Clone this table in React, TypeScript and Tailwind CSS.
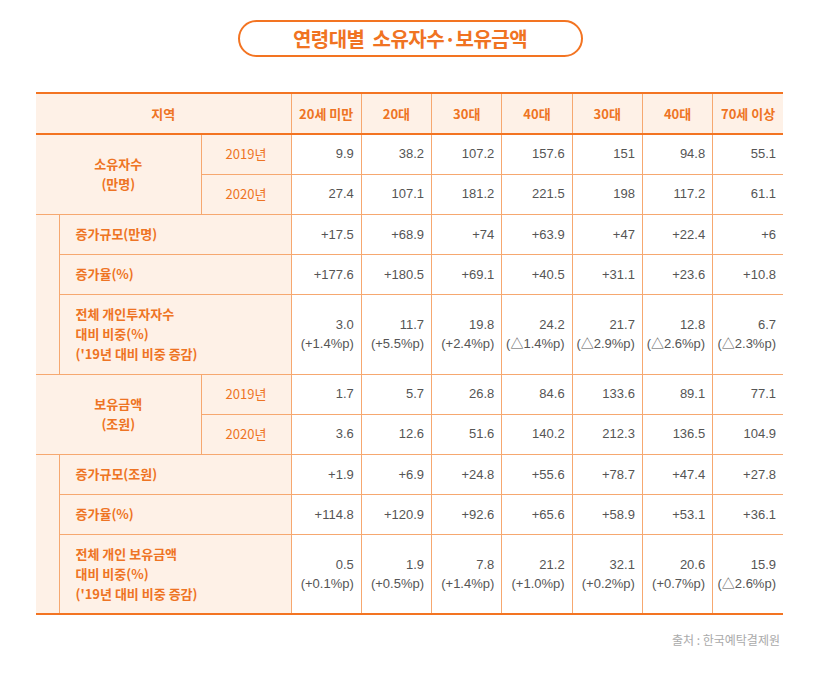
import React from "react"

const ages = ["20세 미만", "20대", "30대", "40대", "30대", "40대", "70세 이상"]

type Group = {
  title: string[]
  years: { label: string; values: string[] }[]
  subs: { label: string[]; values: string[][] }[]
}

const groups: Group[] = [
  {
    title: ["소유자수", "(만명)"],
    years: [
      { label: "2019년", values: ["9.9", "38.2", "107.2", "157.6", "151", "94.8", "55.1"] },
      { label: "2020년", values: ["27.4", "107.1", "181.2", "221.5", "198", "117.2", "61.1"] },
    ],
    subs: [
      { label: ["증가규모(만명)"], values: [["+17.5"], ["+68.9"], ["+74"], ["+63.9"], ["+47"], ["+22.4"], ["+6"]] },
      { label: ["증가율(%)"], values: [["+177.6"], ["+180.5"], ["+69.1"], ["+40.5"], ["+31.1"], ["+23.6"], ["+10.8"]] },
      {
        label: ["전체 개인투자자수", "대비 비중(%)", "('19년 대비 비중 증감)"],
        values: [
          ["3.0", "(+1.4%p)"],
          ["11.7", "(+5.5%p)"],
          ["19.8", "(+2.4%p)"],
          ["24.2", "(△1.4%p)"],
          ["21.7", "(△2.9%p)"],
          ["12.8", "(△2.6%p)"],
          ["6.7", "(△2.3%p)"],
        ],
      },
    ],
  },
  {
    title: ["보유금액", "(조원)"],
    years: [
      { label: "2019년", values: ["1.7", "5.7", "26.8", "84.6", "133.6", "89.1", "77.1"] },
      { label: "2020년", values: ["3.6", "12.6", "51.6", "140.2", "212.3", "136.5", "104.9"] },
    ],
    subs: [
      { label: ["증가규모(조원)"], values: [["+1.9"], ["+6.9"], ["+24.8"], ["+55.6"], ["+78.7"], ["+47.4"], ["+27.8"]] },
      { label: ["증가율(%)"], values: [["+114.8"], ["+120.9"], ["+92.6"], ["+65.6"], ["+58.9"], ["+53.1"], ["+36.1"]] },
      {
        label: ["전체 개인 보유금액", "대비 비중(%)", "('19년 대비 비중 증감)"],
        values: [
          ["0.5", "(+0.1%p)"],
          ["1.9", "(+0.5%p)"],
          ["7.8", "(+1.4%p)"],
          ["21.2", "(+1.0%p)"],
          ["32.1", "(+0.2%p)"],
          ["20.6", "(+0.7%p)"],
          ["15.9", "(△2.6%p)"],
        ],
      },
    ],
  },
]

// thin grid line + label cell styles
const line = "border-b border-r border-[#f6a870]"
const labelCell = `${line} bg-[#fef1e7] text-[#ee7424]`
const dataCell = `${line} bg-white text-right pr-[7px] text-[#555] last:border-r-0 font-[Liberation_Sans,Noto_Sans_CJK_KR,sans-serif]`

export default function App() {
  return (
    <div
      className="w-[820px] h-[689px] bg-white"
      style={{ fontFamily: "'Noto Sans CJK KR', 'Noto Sans', sans-serif" }}
    >
      <div className="flex justify-center pt-[20px]">
        <div className="w-[345px] h-[37px] rounded-full border-2 border-[#f37422] flex items-center justify-center">
          <span className="text-[20px] font-bold text-[#f07322] tracking-[-0.5px] [word-spacing:4px]">
            연령대별 소유자수·보유금액
          </span>
        </div>
      </div>

      <table className="mt-[35px] ml-[36px] w-[747px] table-fixed border-collapse text-[13px] leading-[18px]">
        <colgroup>
          <col className="w-[23px]" />
          <col className="w-[142px]" />
          <col className="w-[90px]" />
          {ages.map((_, i) => (
            <col key={i} />
          ))}
        </colgroup>
        <thead>
          <tr className="h-[41px]">
            <th
              colSpan={3}
              className="border-t-2 border-b-2 border-r border-t-[#f37422] border-b-[#f37422] border-r-[#f6a870] bg-[#fef1e7] text-[#ee7424] font-bold"
            >
              지역
            </th>
            {ages.map((a, i) => (
              <th
                key={i}
                className="border-t-2 border-b-2 border-r border-t-[#f37422] border-b-[#f37422] border-r-[#f6a870] last:border-r-0 bg-[#fef1e7] text-[#ee7424] font-bold"
              >
                {a}
              </th>
            ))}
          </tr>
        </thead>
        <tbody>
          {groups.map((g, gi) => (
            <React.Fragment key={gi}>
              {g.years.map((y, yi) => (
                <tr key={"y" + yi} className="h-[40px]">
                  {yi === 0 && (
                    <td rowSpan={2} colSpan={2} className={`${labelCell} text-center font-semibold leading-[20px]`}>
                      {g.title.map((t, ti) => (
                        <div key={ti}>{t}</div>
                      ))}
                    </td>
                  )}
                  <td className={`${labelCell} text-center`}>{y.label}</td>
                  {y.values.map((v, vi) => (
                    <td key={vi} className={dataCell}>
                      {v}
                    </td>
                  ))}
                </tr>
              ))}
              {g.subs.map((s, si) => {
                const last = gi === groups.length - 1 && si === g.subs.length - 1
                const bottom = last ? "border-b-2 border-b-[#f37422]" : ""
                return (
                  <tr key={"s" + si} className={s.label.length > 1 ? "h-[80px]" : "h-[40px]"}>
                    {si === 0 && (
                      <td rowSpan={3} className={`${labelCell} ${gi === groups.length - 1 ? "border-b-2 border-b-[#f37422]" : ""}`} />
                    )}
                    <td colSpan={2} className={`${labelCell} ${bottom} pl-4 text-left font-semibold leading-[20px]`}>
                      {s.label.map((t, ti) => (
                        <div key={ti}>{t}</div>
                      ))}
                    </td>
                    {s.values.map((v, vi) => (
                      <td key={vi} className={`${dataCell} ${bottom} leading-[19px]`}>
                        {v.map((t, ti) => (
                          <div key={ti}>{t}</div>
                        ))}
                      </td>
                    ))}
                  </tr>
                )
              })}
            </React.Fragment>
          ))}
        </tbody>
      </table>

      <div className="w-[780px] mt-[16px] text-right text-[12px] text-[#aaaaaa]">출처 : 한국예탁결제원</div>
    </div>
  )
}
